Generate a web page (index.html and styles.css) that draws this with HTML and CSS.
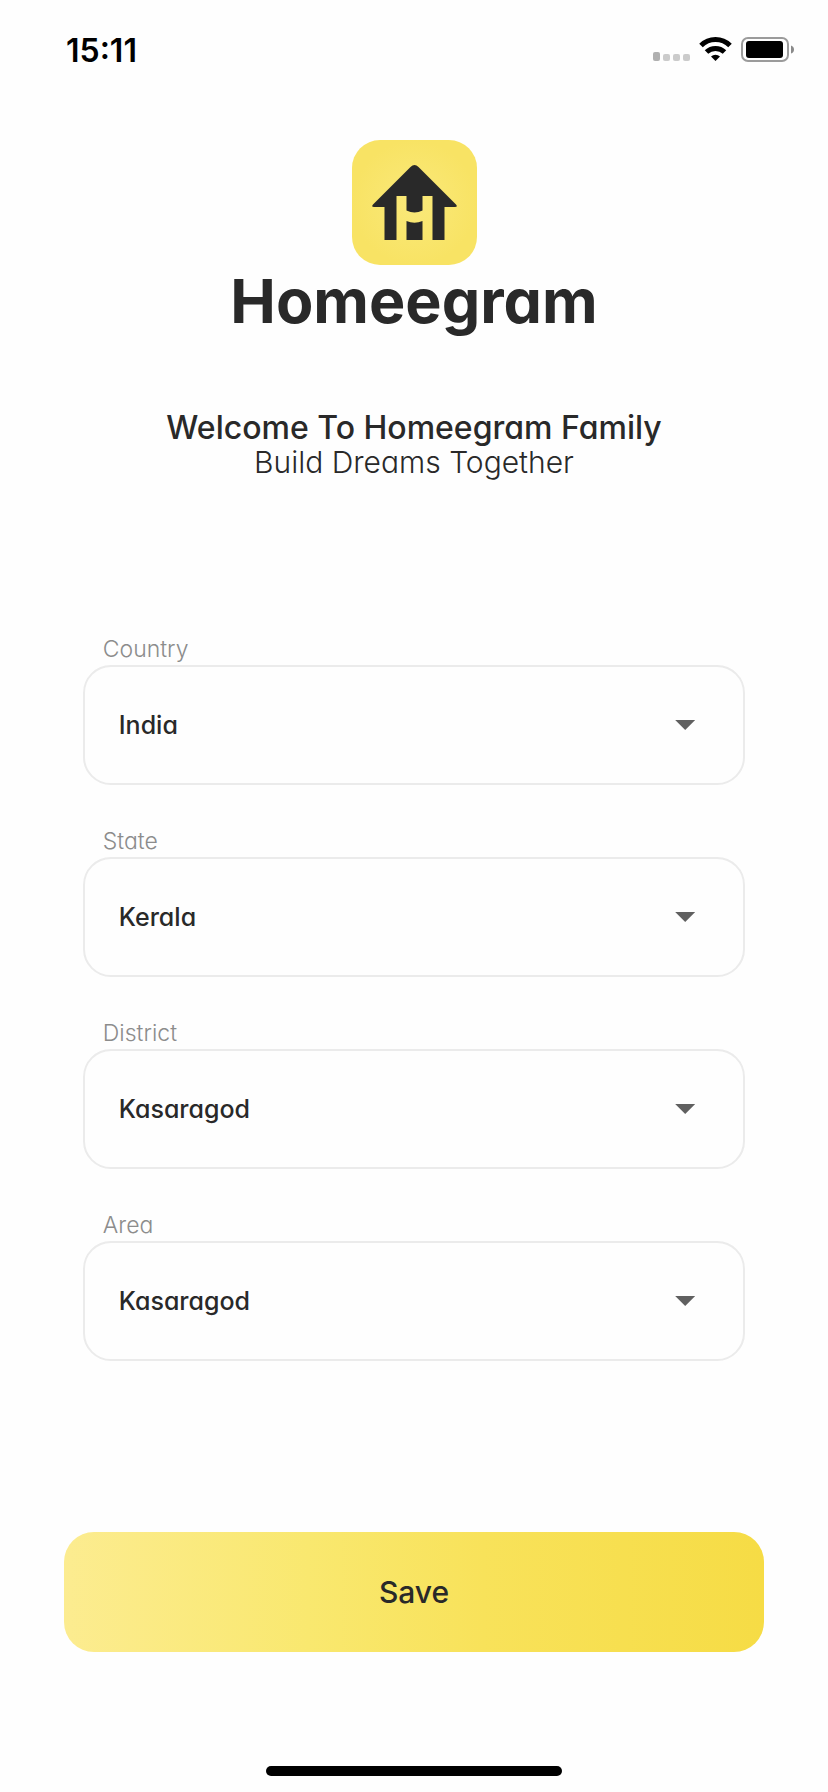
FILE: index.html
```html
<!DOCTYPE html>
<html lang="en">
<head>
<meta charset="UTF-8" />
<meta name="viewport" content="width=device-width, initial-scale=1" />
<title>Homeegram</title>
<link rel="stylesheet" href="styles.css">
</head>
<body>
<header class="status-bar">
    <span class="time">15:11</span>
    <svg class="status-icons" width="144" height="28" viewBox="0 0 144 28" aria-hidden="true">
        <rect x="1" y="16" width="7" height="9" rx="2" fill="#b0b0b0" />
        <rect x="11" y="18" width="7" height="7" rx="2" fill="#cbcbcb" />
        <rect x="21" y="18" width="7" height="7" rx="2" fill="#cbcbcb" />
        <rect x="31" y="18" width="7" height="7" rx="2" fill="#cbcbcb" />
        <g fill="none" stroke="#000" stroke-width="5">
            <path d="M49 9.500a20.500 20.500 0 0 1 29 0" />
            <path d="M54.500 16a13 13 0 0 1 18 0" />
        </g>
        <path d="M63.500 25l-4.500-4.500a6.500 6.500 0 0 1 9 0z" />
        <rect x="90" y="2" width="46" height="23" rx="6" fill="none" stroke="#9b9b9b" stroke-width="2" />
        <rect x="94" y="5" width="37" height="17" rx="3" />
        <path d="M139 9.500q3 1 3 4t-3 4z" fill="#8a8a8a" />
    </svg>
</header>

<main>
    <div class="brand">
        <svg class="brand-icon" viewBox="0 0 125 125" aria-hidden="true">
            <defs>
                <radialGradient id="glow">
                    <stop offset="0" stop-color="#fae97a" />
                    <stop offset="1" stop-color="#f8e364" />
                </radialGradient>
            </defs>
            <rect width="125" height="125" rx="28" fill="url(#glow)" />
            <path d="M58.500 27Q62.500 23 66.500 27L104 64.500Q106 67 103 67H92.500V100H80.500V56H70.500V70.500Q62.500 74.500 54.500 70.500V56H44.500V100H32.500V67H22Q19 67 21 64.500Z" fill="#292929" />
            <path d="M54.500 81Q62.500 84.500 70.500 81V100H54.500Z" fill="#292929" />
        </svg>
        <span class="brand-name">Homeegram</span>
    </div>

    <div class="welcome">
        <h1>Welcome To Homeegram Family</h1>
        <p>Build Dreams Together</p>
    </div>

    <form>
        <div class="fields">
            <div class="field">
                <label for="country">Country</label>
                <div class="select-box">
                    <select id="country">
                        <option>India</option>
                    </select>
                    <span class="caret"></span>
                </div>
            </div>
            <div class="field">
                <label for="state">State</label>
                <div class="select-box">
                    <select id="state">
                        <option>Kerala</option>
                    </select>
                    <span class="caret"></span>
                </div>
            </div>
            <div class="field">
                <label for="district">District</label>
                <div class="select-box">
                    <select id="district">
                        <option>Kasaragod</option>
                    </select>
                    <span class="caret"></span>
                </div>
            </div>
            <div class="field">
                <label for="area">Area</label>
                <div class="select-box">
                    <select id="area">
                        <option>Kasaragod</option>
                    </select>
                    <span class="caret"></span>
                </div>
            </div>
        </div>
        <button type="submit" class="save-btn">Save</button>
    </form>
</main>

<div class="home-indicator"></div>
</body>
</html>
```
FILE: styles.css
```css
* {
    box-sizing: border-box;
}
body {
    margin: 0;
    background: #fefefe;
    color: #292929;
    font-family: Inter, "Liberation Sans", sans-serif;
}

.status-bar {
    display: flex;
    justify-content: space-between;
    align-items: center;
    height: 100px;
    padding: 0 32px 0 66px;
    color: #000;
}
.time {
    font-size: 32px;
    font-weight: 600;
}

/* single-storey "a" everywhere but the button */
.brand,
.welcome,
.field,
select {
    font-feature-settings: "cv11";
}

.brand {
    display: flex;
    flex-direction: column;
    align-items: center;
    padding-top: 40px;
}
.brand-icon {
    display: block;
    width: 125px;
    height: 125px;
}
.brand-name {
    font-size: 61px;
    font-weight: 700;
    line-height: 72px;
}

.welcome {
    margin-top: 74px;
    text-align: center;
    line-height: 34px;
}
.welcome h1 {
    margin: 0;
    font-size: 32px;
    font-weight: 500;
}
.welcome p {
    margin: 0;
    font-size: 30px;
    font-weight: 300;
}

.fields {
    display: flex;
    flex-direction: column;
    gap: 42px;
    margin: 156px 10% 0;
}
.field label {
    display: block;
    padding: 0 20px 2px;
    font-size: 23px;
    font-weight: 300;
    line-height: 28px;
    color: #8c8c8c;
}
.select-box {
    display: grid;
    align-items: center;
}
.select-box select,
.caret {
    grid-area: 1 / 1;
}
select {
    appearance: none;
    width: 100%;
    height: 120px;
    padding: 0 80px 0 34px;
    border: 2px solid #ebebeb;
    border-radius: 28px;
    background: transparent;
    color: #292929;
    font-family: inherit;
    font-size: 25px;
    font-weight: 500;
}
.caret {
    justify-self: end;
    width: 20px;
    height: 10px;
    margin-right: 50px;
    background: #606060;
    clip-path: polygon(0 0, 100% 0, 50% 100%);
    pointer-events: none;
}

.save-btn {
    display: block;
    width: calc(100% - 128px);
    height: 120px;
    margin: 171px auto 0;
    border: none;
    border-radius: 30px;
    background: linear-gradient(90deg, #fcec90, #f9e86f 35%, #f8e25a 60%, #f6dc45);
    color: #292929;
    font-family: inherit;
    font-size: 30px;
    font-weight: 500;
    cursor: pointer;
}

.home-indicator {
    width: 296px;
    height: 10px;
    margin: 114px auto 16px;
    border-radius: 5px;
    background: #000;
}
```
